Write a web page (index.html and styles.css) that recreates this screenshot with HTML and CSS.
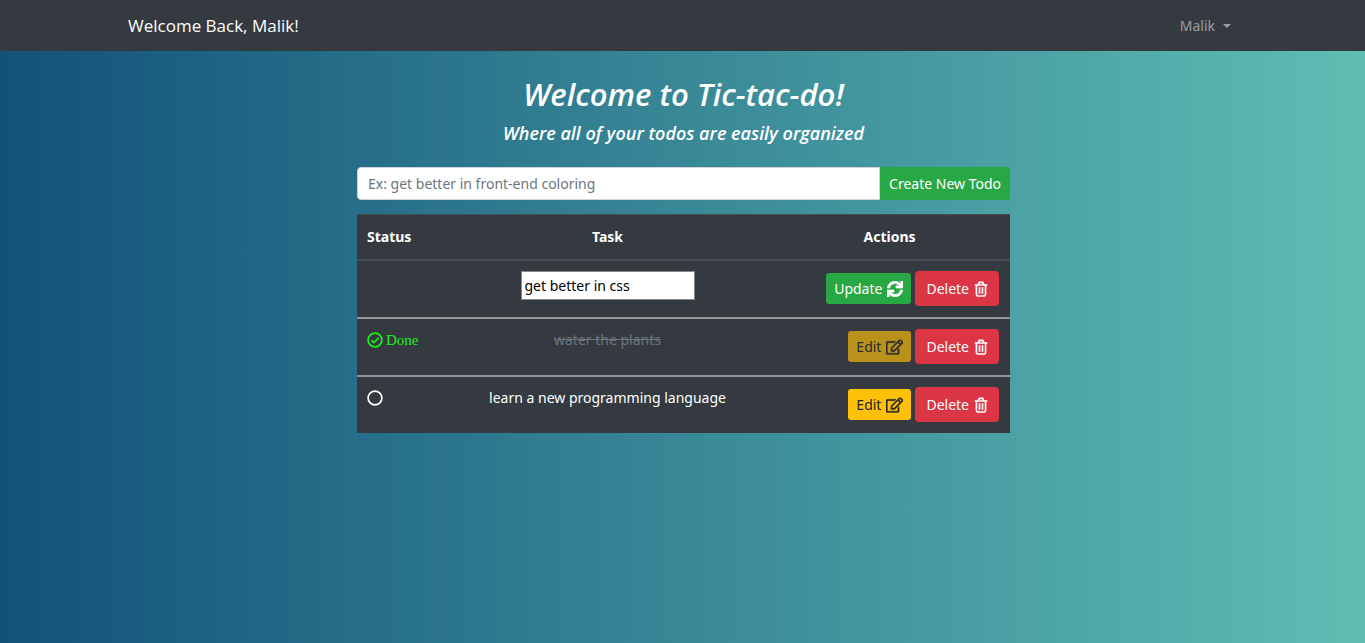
FILE: index.html
```html
<!DOCTYPE html>
<html lang="en">
<head>
<meta charset="utf-8">
<meta name="viewport" content="width=device-width, initial-scale=1">
<title>Tic-tac-do</title>
<link rel="stylesheet" href="styles.css">
</head>
<body>
<svg class="sprite" aria-hidden="true">
  <symbol id="trash" viewBox="0 0 16 18" fill="none" stroke="currentColor" stroke-width="1.9">
    <path d="M.8 4.400h14.400M2.800 4.500v10.700q0 1.800 1.700 1.800h7q1.700 0 1.700-1.800V4.500M4.800 4l1.200-2.500h4L11.200 4M6.300 7v7.500M9.700 7v7.500"/>
  </symbol>
  <symbol id="pencil" viewBox="0 0 576 512">
    <path fill="currentColor" stroke="currentColor" stroke-width="10" d="M402.300 344.900l32-32c5-5 13.700-1.500 13.700 5.700V464c0 26.500-21.500 48-48 48H48c-26.500 0-48-21.500-48-48V112c0-26.500 21.500-48 48-48h273.500c7.100 0 10.700 8.600 5.700 13.700l-32 32c-1.500 1.500-3.500 2.300-5.700 2.300H48v352h352V350.500c0-2.100.8-4.100 2.300-5.600zm156.600-201.800L296.300 405.700l-90.400 10c-26.200 2.900-48.500-19.200-45.600-45.600l10-90.400L432.900 17.100c22.900-22.900 59.900-22.900 82.700 0l43.200 43.200c22.900 22.900 22.900 60 .1 82.800zM460.100 174L402 115.900 216.200 301.800l-7.300 65.300 65.300-7.300L460.100 174zm64.800-79.700l-43.200-43.200c-4.100-4.100-10.800-4.100-14.800 0L436 82l58.100 58.100 30.900-30.900c4-4.200 4-10.800-.1-14.900z"/>
  </symbol>
  <symbol id="refresh" viewBox="0 0 512 512">
    <path fill="currentColor" stroke="currentColor" stroke-width="22" d="M440.650 12.570l4 82.770A247.160 247.160 0 0 0 255.830 8C134.730 8 33.910 94.920 12.290 209.820A12 12 0 0 0 24.090 224h49.050a12 12 0 0 0 11.670-9.260 175.910 175.910 0 0 1 317-56.940l-101.460-4.860a12 12 0 0 0-12.570 12v47.410a12 12 0 0 0 12 12H500a12 12 0 0 0 12-12V12a12 12 0 0 0-12-12h-47.370a12 12 0 0 0-11.980 12.570zM255.830 432a175.610 175.610 0 0 1-146-77.800l101.800 4.870a12 12 0 0 0 12.570-12v-47.400a12 12 0 0 0-12-12H12a12 12 0 0 0-12 12V500a12 12 0 0 0 12 12h47.350a12 12 0 0 0 12-12.600l-4.150-82.570A247.170 247.170 0 0 0 255.830 504c121.110 0 221.930-86.920 243.550-201.820a12 12 0 0 0-11.800-14.180h-49.050a12 12 0 0 0-11.670 9.260A175.860 175.860 0 0 1 255.830 432z"/>
  </symbol>
  <symbol id="ring" viewBox="0 0 16 16" fill="none" stroke="currentColor">
    <circle cx="8" cy="8" r="6.900" stroke-width="1.700"/>
  </symbol>
  <symbol id="check" viewBox="0 0 16 16" fill="none" stroke="currentColor" stroke-width="1.700">
    <circle cx="8" cy="8" r="6.900"/><path d="M4.400 8.100l2.500 2.500 4.800-4.800"/>
  </symbol>
</svg>
<nav class="navbar">
  <div class="navbar-inner">
    <a class="brand" href="#">Welcome Back, Malik!</a>
    <a class="user-link" href="#">Malik<span class="caret"></span></a>
  </div>
</nav>
<main class="content">
  <h1 class="title">Welcome to Tic-tac-do!</h1>
  <h2 class="subtitle">Where all of your todos are easily organized</h2>
  <form class="todo-form">
    <input class="todo-input" type="text" aria-label="New todo" placeholder="Ex: get better in front-end coloring">
    <button class="btn btn-create" type="button">Create New Todo</button>
  </form>
  <table class="todos">
    <colgroup><col class="col-status"><col class="col-task"><col class="col-actions"></colgroup>
    <thead>
      <tr><th class="status">Status</th><th>Task</th><th>Actions</th></tr>
    </thead>
    <tbody>
      <tr>
        <td class="status"></td>
        <td><input class="edit-input" type="text" aria-label="Edit task" value="get better in css"></td>
        <td><div class="actions">
          <button class="btn btn-success" type="button">Update <svg class="icon"><use href="#refresh"/></svg></button>
          <button class="btn btn-danger" type="button">Delete <svg class="icon icon-trash"><use href="#trash"/></svg></button>
        </div></td>
      </tr>
      <tr>
        <td class="status"><span class="state done"><svg class="icon-state"><use href="#check"/></svg>Done</span></td>
        <td><s class="finished">water the plants</s></td>
        <td><div class="actions">
          <button class="btn btn-warning" type="button" disabled>Edit <svg class="icon icon-edit"><use href="#pencil"/></svg></button>
          <button class="btn btn-danger" type="button">Delete <svg class="icon icon-trash"><use href="#trash"/></svg></button>
        </div></td>
      </tr>
      <tr>
        <td class="status"><span class="state"><svg class="icon-state"><use href="#ring"/></svg></span></td>
        <td>learn a new programming language</td>
        <td><div class="actions">
          <button class="btn btn-warning" type="button">Edit <svg class="icon icon-edit"><use href="#pencil"/></svg></button>
          <button class="btn btn-danger" type="button">Delete <svg class="icon icon-trash"><use href="#trash"/></svg></button>
        </div></td>
      </tr>
    </tbody>
  </table>
</main>
</body>
</html>
```
FILE: styles.css
```css
* { box-sizing: border-box; }
body {
  margin: 0;
  min-height: 100vh;
  background: linear-gradient(to right, #12527a, #5fbdb3);
  color: #fff;
  font: 14px/22px "Noto Sans", "Open Sans", sans-serif;
}
.sprite { display: none; }
.navbar { background: #343a40; }
.navbar-inner {
  display: flex;
  align-items: center;
  justify-content: space-between;
  max-width: 1109px;
  min-height: 51px;
  margin: 0 auto;
}
.brand { color: #fff; font-family: "Open Sans", sans-serif; font-size: 17px; line-height: 24px; text-decoration: none; }
.user-link {
  display: flex;
  align-items: center;
  gap: 8px;
  padding: 0 6px;
  color: #9a9da0;
  text-decoration: none;
}
.caret { border: 4px solid transparent; border-top-color: currentColor; border-bottom: 0; }
.content { max-width: 655px; margin: 0 auto; padding: 22px 0 0 2px; }
.title, .subtitle {
  margin: 0;
  font-family: "Open Sans", sans-serif;
  font-style: italic;
  font-weight: 600;
  text-align: center;
}
.title { font-size: 31px; line-height: 42px; }
.subtitle { margin-bottom: 16px; font-size: 18px; line-height: 36px; }
.todo-form { display: flex; margin-bottom: 14px; }
.todo-input {
  flex: 1;
  min-width: 0;
  height: 33px;
  padding: 0 10px;
  border: 1px solid #ced4da;
  border-radius: 4px 0 0 4px;
  background: #fff;
  color: #495057;
  font: inherit;
}
.todo-input::placeholder { color: #6c757d; opacity: 1; }
.btn {
  display: inline-flex;
  align-items: center;
  gap: 5px;
  height: 31px;
  padding: 0 8px;
  border: 0;
  border-radius: 3px;
  color: #fff;
  font: inherit;
  white-space: nowrap;
}
.btn-create { height: 33px; padding: 0 9px; border-radius: 0 3px 3px 0; background: #28a745; }
.btn-success { background: #28a745; }
.btn-danger { height: 35px; padding: 0 11px; border-radius: 4px; background: #dc3545; }
.btn-warning { background: #ffc107; color: #212529; }
.btn-warning:disabled { opacity: .65; }
.icon { width: 16px; height: 16px; overflow: visible; }
.icon-trash { width: 14px; }
.icon-edit { width: 17px; }
.todos {
  width: 100%;
  border-collapse: separate;
  border-spacing: 0;
  table-layout: fixed;
  background: #343a40;
  text-align: center;
}
.col-status { width: 89px; }
.col-actions { width: 241px; }
.todos th { padding: 11px 10px; border-top: 1px solid #454d55; border-bottom: 2px solid #454d55; font-weight: 700; }
.todos td { height: 58px; padding: 10px 11px; border-bottom: 2px solid #939698; vertical-align: top; }
.todos tbody tr:last-child td { height: 56px; border-bottom: 0; }
.todos .status { padding-left: 10px; text-align: left; }
.actions { display: flex; align-items: center; justify-content: flex-end; gap: 4px; }
.edit-input {
  width: 174px;
  height: 29px;
  padding: 0 3px;
  border: 1px solid #858585;
  background: #fff;
  color: #000;
  font: inherit;
}
.state { display: flex; align-items: center; gap: 3px; min-height: 22px; }
.done { color: #1ef01e; font-family: "Liberation Serif", serif; font-size: 15px; }
.icon-state { width: 16px; height: 16px; }
.finished { color: #6c757d; }
```
